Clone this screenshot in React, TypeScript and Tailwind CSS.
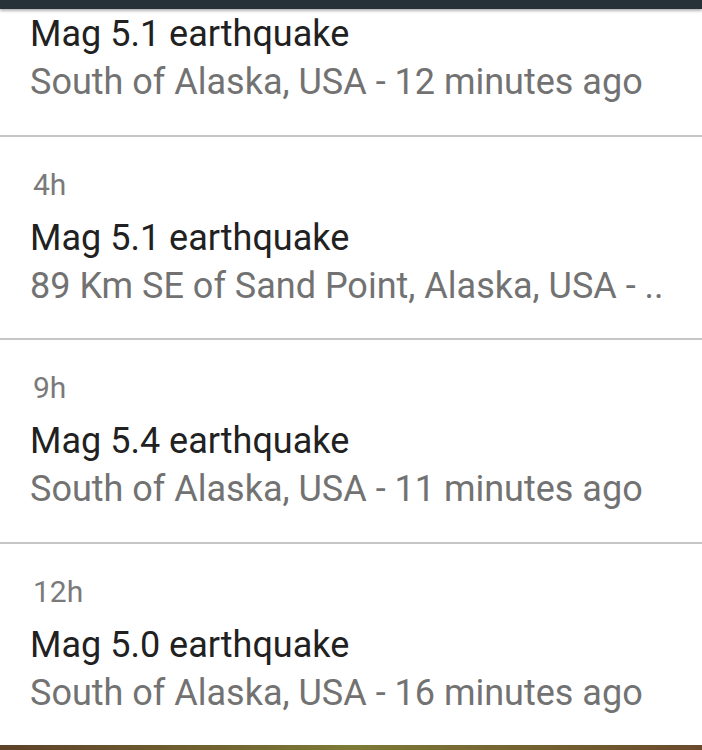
const quakes = [
  { time: '', title: 'Mag 5.1 earthquake', place: 'South of Alaska, USA - 12 minutes ago' },
  { time: '4h', title: 'Mag 5.1 earthquake', place: '89 Km SE of Sand Point, Alaska, USA - ..' },
  { time: '9h', title: 'Mag 5.4 earthquake', place: 'South of Alaska, USA - 11 minutes ago' },
  { time: '12h', title: 'Mag 5.0 earthquake', place: 'South of Alaska, USA - 16 minutes ago' },
]

const QuakeRow = ({ time, title, place, first }: { time: string; title: string; place: string; first: boolean }) => {
  return <div className="flex flex-col">
    {!first && <div className="h-[2px] bg-[#c6c6c6]" />}
    <div className="flex flex-col pl-[30px] pt-[33px] pb-[28.5px]">
      {time && <span className="mb-[14px] ml-[3px] text-[30px] leading-[30px] text-[#7a7a7a]">{time}</span>}
      <span className="text-[36px] leading-[48px] text-[#212121] whitespace-nowrap">{title}</span>
      <span className="text-[36px] leading-[48px] text-[#727272] whitespace-nowrap">{place}</span>
    </div>
  </div>
}

export default function App() {
  return <div className="relative h-[750px] w-[702px] overflow-hidden bg-white" style={{ fontFamily: 'Roboto, "Noto Sans", sans-serif' }}>
    {/* app bar sits over the scrolled list */}
    <div className="absolute left-0 right-0 top-0 z-10 h-[9px] bg-[#263238] shadow-[0_2px_3px_rgba(0,0,0,0.3)]" />
    <div className="h-[745px] overflow-hidden">
      <div className="-mt-[23px] flex flex-col">
        {quakes.map((q, i) => <QuakeRow key={i} {...q} first={i === 0} />)}
      </div>
    </div>
    <div className="h-[5px] bg-gradient-to-r from-[#5e4128] via-[#7d7a36] to-[#6a4a2c]" />
  </div>
}
